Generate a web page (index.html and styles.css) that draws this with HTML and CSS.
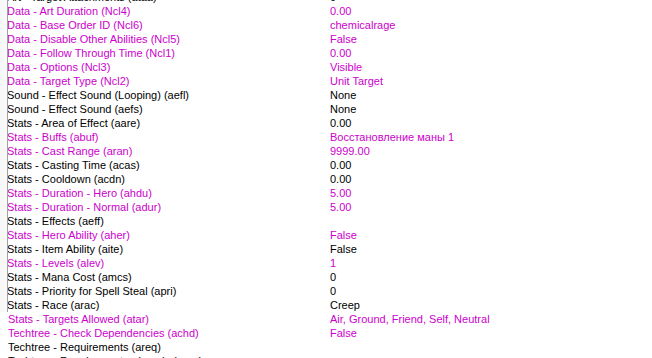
FILE: index.html
```html
<!DOCTYPE html>
<html>
<head>
<meta charset="utf-8">
<link rel="stylesheet" href="styles.css">
</head>
<body>
<div class="sheet">
  <div class="block framed">
    <div class="strip"></div>
    <div class="rows">
      <div class="row"><span class="name">Art - Target Attachments (ataa)</span><span class="val">0</span></div>
      <div class="row mod"><span class="name">Data - Art Duration (Ncl4)</span><span class="val">0.00</span></div>
      <div class="row mod"><span class="name">Data - Base Order ID (Ncl6)</span><span class="val">chemicalrage</span></div>
      <div class="row mod"><span class="name">Data - Disable Other Abilities (Ncl5)</span><span class="val">False</span></div>
      <div class="row mod"><span class="name">Data - Follow Through Time (Ncl1)</span><span class="val">0.00</span></div>
      <div class="row mod"><span class="name">Data - Options (Ncl3)</span><span class="val">Visible</span></div>
      <div class="row mod"><span class="name">Data - Target Type (Ncl2)</span><span class="val">Unit Target</span></div>
      <div class="row"><span class="name">Sound - Effect Sound (Looping) (aefl)</span><span class="val">None</span></div>
      <div class="row"><span class="name">Sound - Effect Sound (aefs)</span><span class="val">None</span></div>
      <div class="row"><span class="name">Stats - Area of Effect (aare)</span><span class="val">0.00</span></div>
      <div class="row mod"><span class="name">Stats - Buffs (abuf)</span><span class="val">Восстановление маны 1</span></div>
      <div class="row mod"><span class="name">Stats - Cast Range (aran)</span><span class="val">9999.00</span></div>
      <div class="row"><span class="name">Stats - Casting Time (acas)</span><span class="val">0.00</span></div>
      <div class="row"><span class="name">Stats - Cooldown (acdn)</span><span class="val">0.00</span></div>
      <div class="row mod"><span class="name">Stats - Duration - Hero (ahdu)</span><span class="val">5.00</span></div>
      <div class="row mod"><span class="name">Stats - Duration - Normal (adur)</span><span class="val">5.00</span></div>
      <div class="row"><span class="name">Stats - Effects (aeff)</span><span class="val"></span></div>
      <div class="row mod"><span class="name">Stats - Hero Ability (aher)</span><span class="val">False</span></div>
      <div class="row"><span class="name">Stats - Item Ability (aite)</span><span class="val">False</span></div>
      <div class="row mod"><span class="name">Stats - Levels (alev)</span><span class="val">1</span></div>
      <div class="row"><span class="name">Stats - Mana Cost (amcs)</span><span class="val">0</span></div>
      <div class="row"><span class="name">Stats - Priority for Spell Steal (apri)</span><span class="val">0</span></div>
      <div class="row"><span class="name">Stats - Race (arac)</span><span class="val">Creep</span></div>
    </div>
  </div>
  <div class="block plain">
    <div class="rows">
      <div class="row mod"><span class="name">Stats - Targets Allowed (atar)</span><span class="val">Air, Ground, Friend, Self, Neutral</span></div>
      <div class="row mod"><span class="name">Techtree - Check Dependencies (achd)</span><span class="val">False</span></div>
      <div class="row"><span class="name">Techtree - Requirements (areq)</span><span class="val"></span></div>
      <div class="row"><span class="name">Techtree - Requirements - Levels (arqa)</span><span class="val"></span></div>
    </div>
  </div>
</div>
</body>
</html>
```
FILE: styles.css
```css
html, body {
  margin: 0;
  padding: 0;
  background: #ffffff;
  overflow: hidden;
}
body {
  width: 652px;
  height: 358px;
  font-family: "Liberation Sans", Arial, sans-serif;
  font-size: 11px;
  color: #000000;
}
.sheet {
  margin-top: -10px;
}
.block {
  display: flex;
}
.framed .strip {
  width: 7px;
  background: #f8f8f8;
  border-right: 1px solid #a0a0a0;
  flex: none;
}
.framed .rows {
  overflow: hidden;
  flex: 1;
}
.framed .name {
  margin-left: -1px;
  width: 323px;
}
.plain .rows {
  padding-left: 8px;
  flex: 1;
}
.row {
  display: flex;
  height: 14px;
  line-height: 14px;
  white-space: nowrap;
}
.name {
  width: 322px;
  flex: none;
  overflow: hidden;
}
.val {
  flex: 1;
}
.mod {
  color: #cc00cc;
}
```
